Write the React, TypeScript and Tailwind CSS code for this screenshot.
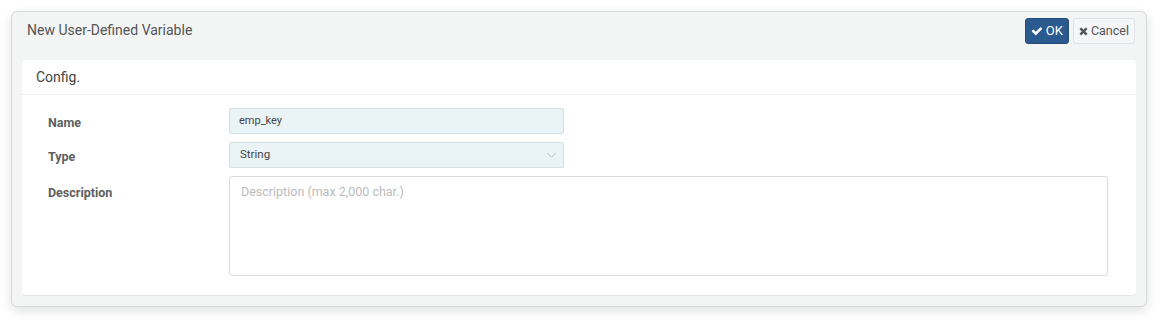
import React from 'react';

const CheckIcon = () => (
  <svg viewBox="0 0 1792 1792" className="w-[12px] h-[12px]" fill="currentColor">
    <path d="M1671 566q0 40-28 68l-724 724-136 136q-28 28-68 28t-68-28l-136-136-362-362q-28-28-28-68t28-68l136-136q28-28 68-28t68 28l294 295 656-657q28-28 68-28t68 28l136 136q28 28 28 68z" />
  </svg>
);

const TimesIcon = () => (
  <svg viewBox="0 0 1408 1792" className="w-[9px] h-[12px]" fill="currentColor">
    <path d="M1298 1322q0 40-28 68l-136 136q-28 28-68 28t-68-28l-294-294-294 294q-28 28-68 28t-68-28l-136-136q-28-28-28-68t28-68l294-294-294-294q-28-28-28-68t28-68l136-136q28-28 68-28t68 28l294 294 294-294q28-28 68-28t68 28l136 136q28 28 28 68t-28 68l-294 294 294 294q28 28 28 68z" />
  </svg>
);

export default function App() {
  return (
    <div className="min-h-screen bg-white pt-[11px] pl-[11px]" style={{ fontFamily: 'Roboto, "Liberation Sans", sans-serif' }}>
      <div className="w-[1136px] h-[296px] rounded-[6px] border border-[#d6d9d9] bg-[#f3f4f4] shadow-[0_4px_12px_rgba(0,0,0,0.12)] flex flex-col">
        {/* header */}
        <div className="h-[48px] flex items-start justify-between pl-[15px] pr-[11px] pt-[6px]">
          <h1 className="text-[14px] text-[#555] pt-[2px]">New User-Defined Variable</h1>
          <div className="flex gap-[4px]">
            <button className="h-[26px] px-[5px] flex items-center gap-[3px] rounded-[3px] bg-[#2b5a8e] border border-[#234c7a] text-white text-[13px]">
              <CheckIcon />
              OK
            </button>
            <button className="h-[26px] px-[5px] flex items-center gap-[3px] rounded-[3px] bg-[#f4f6f8] border border-[#dfe3e6] text-[#555] text-[12.5px]">
              <TimesIcon />
              Cancel
            </button>
          </div>
        </div>

        {/* card */}
        <div className="mx-[10px] mb-[11px] flex-1 rounded-[4px] bg-white shadow-[0_1px_1px_rgba(0,0,0,0.06)] flex flex-col">
          <div className="h-[35px] flex items-center pl-[14px] border-b border-[#eef0f0]">
            <span className="text-[14px] text-[#444]">Config.</span>
          </div>

          <div className="pt-[13px] pl-[26px] pr-[28px] flex flex-col gap-[8px]">
            <div className="flex items-center">
              <label className="w-[181px] text-[12.5px] font-bold text-[#606060] pt-[5px]">Name</label>
              <div className="w-[335px] h-[26px] flex items-center px-[9px] bg-[#eaf3f6] border border-[#d2e1e6] rounded-[2px] text-[11px] text-[#444]">
                emp_key
              </div>
            </div>
            <div className="flex items-center">
              <label className="w-[181px] text-[12.5px] font-bold text-[#606060] pt-[5px]">Type</label>
              <div className="w-[335px] h-[26px] flex items-center justify-between pl-[10px] pr-[6px] bg-[#eaf3f6] border border-[#d2e1e6] rounded-[2px] text-[11.5px] text-[#444]">
                <span>String</span>
                <svg viewBox="0 0 12 8" className="w-[11px] h-[7px]" fill="none" stroke="#b3b9bc" strokeWidth="1">
                  <path d="M1 1l5 5 5-5" />
                </svg>
              </div>
            </div>
            <div className="flex items-start">
              <label className="w-[181px] text-[12.5px] font-bold text-[#606060] pt-[8px]">Description</label>
              <textarea
                placeholder="Description (max 2,000 char.)"
                className="flex-1 h-[100px] resize-none rounded-[3px] border border-[#dcdcdc] px-[11px] py-[6px] text-[12.5px] text-[#444] placeholder:text-[#bbb] outline-none"
              />
            </div>
          </div>
        </div>
      </div>
    </div>
  );
}
